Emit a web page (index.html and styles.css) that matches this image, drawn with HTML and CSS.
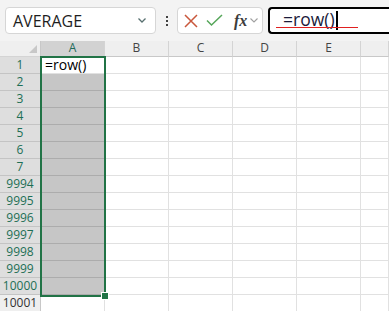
FILE: index.html
```html
<html>
    <head>
        <title>Sheet</title>
    <link rel="stylesheet" href="styles.css">
    </head>
    <body>
        <div class="toolbar">
            <div class="namebox">
                <span class="name">AVERAGE</span>
                <svg class="chev" width="8" height="5" viewBox="0 0 8 5"><polyline points="0.5,0.5 4,4 7.5,0.5" fill="none" stroke="#587070" stroke-width="1.3"/></svg>
            </div>
            <div class="dots"><span></span><span></span><span></span></div>
            <div class="fxbox">
                <svg width="14" height="14" viewBox="0 0 14 14"><path d="M1 1 L13 13 M13 1 L1 13" stroke="#c9573c" stroke-width="1.5"/></svg>
                <svg width="17" height="13" viewBox="0 0 17 13"><polyline points="1,6.5 5.5,11 16,1" fill="none" stroke="#55a659" stroke-width="1.5"/></svg>
                <span class="fx">fx</span>
                <svg width="8" height="5" viewBox="0 0 8 5"><polyline points="0.5,0.5 4,4 7.5,0.5" fill="none" stroke="#a0a0a0" stroke-width="1.1"/></svg>
            </div>
            <div class="formula">
                <span class="ftext">=row()</span><span class="caret"></span>
                <div class="squiggle"></div>
            </div>
        </div>

        <div class="sheet">
            <div class="row head">
                <div class="rh corner"><div class="tri"></div></div>
                <div class="ch sel">A</div><div class="ch">B</div><div class="ch">C</div><div class="ch">D</div><div class="ch">E</div><div class="ch"></div>
            </div>
            <div class="row"><div class="rh on">1</div><div class="c active">=row()</div><div class="c"></div><div class="c"></div><div class="c"></div><div class="c"></div><div class="c"></div></div>
            <div class="row"><div class="rh on">2</div><div class="c g"></div><div class="c"></div><div class="c"></div><div class="c"></div><div class="c"></div><div class="c"></div></div>
            <div class="row"><div class="rh on">3</div><div class="c g"></div><div class="c"></div><div class="c"></div><div class="c"></div><div class="c"></div><div class="c"></div></div>
            <div class="row"><div class="rh on">4</div><div class="c g"></div><div class="c"></div><div class="c"></div><div class="c"></div><div class="c"></div><div class="c"></div></div>
            <div class="row"><div class="rh on">5</div><div class="c g"></div><div class="c"></div><div class="c"></div><div class="c"></div><div class="c"></div><div class="c"></div></div>
            <div class="row"><div class="rh on">6</div><div class="c g"></div><div class="c"></div><div class="c"></div><div class="c"></div><div class="c"></div><div class="c"></div></div>
            <div class="row"><div class="rh on">7</div><div class="c g"></div><div class="c"></div><div class="c"></div><div class="c"></div><div class="c"></div><div class="c"></div></div>
            <div class="row"><div class="rh on">9994</div><div class="c g"></div><div class="c"></div><div class="c"></div><div class="c"></div><div class="c"></div><div class="c"></div></div>
            <div class="row"><div class="rh on">9995</div><div class="c g"></div><div class="c"></div><div class="c"></div><div class="c"></div><div class="c"></div><div class="c"></div></div>
            <div class="row"><div class="rh on">9996</div><div class="c g"></div><div class="c"></div><div class="c"></div><div class="c"></div><div class="c"></div><div class="c"></div></div>
            <div class="row"><div class="rh on">9997</div><div class="c g"></div><div class="c"></div><div class="c"></div><div class="c"></div><div class="c"></div><div class="c"></div></div>
            <div class="row"><div class="rh on">9998</div><div class="c g"></div><div class="c"></div><div class="c"></div><div class="c"></div><div class="c"></div><div class="c"></div></div>
            <div class="row"><div class="rh on">9999</div><div class="c g"></div><div class="c"></div><div class="c"></div><div class="c"></div><div class="c"></div><div class="c"></div></div>
            <div class="row"><div class="rh on">10000</div><div class="c g"></div><div class="c"></div><div class="c"></div><div class="c"></div><div class="c"></div><div class="c"></div></div>
            <div class="row"><div class="rh">10001</div><div class="c"></div><div class="c"></div><div class="c"></div><div class="c"></div><div class="c"></div><div class="c"></div></div>

            <!-- selection box over column A -->
            <div class="selection"><div class="handle"></div></div>
        </div>
    </body>
</html>
```

FILE: styles.css
```css
body{
    margin:0;
    font-family: "Open Sans", "Noto Sans", sans-serif;
    background-color:#ffffff;
    overflow:hidden;
}
.toolbar{
    height:41px;
    box-sizing:border-box;
    background-color:#f3f3f3;
    display:flex;
    align-items:flex-start;
    padding:7px 0 0 5px;
}
.toolbar > *{
    flex-shrink:0;
}
.namebox{
    width:151px;
    height:27px;
    box-sizing:border-box;
    background-color:white;
    border:1px solid #d6d6d6;
    border-radius:4px;
    display:flex;
    align-items:center;
    justify-content:space-between;
    padding:0 9px 0 7px;
}
.name{
    font-size:16px;
    color:#1e1e1e;
    line-height:1;
}
.dots{
    width:21px;
    height:27px;
    display:flex;
    flex-direction:column;
    align-items:center;
    justify-content:center;
    gap:2px;
}
.dots span{
    width:2px;
    height:2px;
    background-color:#404040;
}
.fxbox{
    width:86px;
    height:27px;
    box-sizing:border-box;
    background-color:white;
    border:1px solid #d6d6d6;
    border-radius:4px;
    display:flex;
    align-items:center;
    padding:0 0 0 6px;
    gap:8px;
}
.fx{
    font-family:"Liberation Serif", serif;
    font-style:italic;
    font-weight:bold;
    font-size:16px;
    color:#3c3c3c;
    margin-left:3px;
    margin-right:-5px;
}
.formula{
    margin-left:5px;
    width:130px;
    height:27px;
    box-sizing:border-box;
    border:2px solid black;
    border-right:none;
    border-radius:4px 0 0 4px;
    background-color:white;
    position:relative;
    display:flex;
    align-items:center;
    padding-left:13px;
}
.ftext{
    font-size:17.5px;
    color:#1b1b3a;
    line-height:1;
    position:relative;
    top:-1px;
}
.caret{
    width:2px;
    height:19px;
    background-color:black;
    margin-left:1px;
}
.squiggle{
    position:absolute;
    left:6px;
    top:18px;
    width:82px;
    height:1px;
    background-color:#e02020;
}
.sheet{
    position:relative;
}
.row{
    display:grid;
    grid-template-columns:41px 64px 64px 64px 64px 64px 28px;
    height:17px;
}
.row.head{
    height:16px;
}
.rh, .ch, .c{
    box-sizing:border-box;
}
.ch{
    background-color:#efefef;
    border-right:1px solid #d4d4d4;
    border-bottom:1px solid #c8c8c8;
    font-size:12px;
    color:#444444;
    text-align:center;
    line-height:14px;
}
.ch.sel{
    background-color:#d2d2d2;
    color:#1e6a5a;
}
.corner{
    background-color:#efefef;
    border-right:1px solid #c8c8c8;
    border-bottom:1px solid #c8c8c8;
    position:relative;
}
.tri{
    position:absolute;
    right:3px;
    bottom:3px;
    width:0;
    height:0;
    border-left:8px solid transparent;
    border-bottom:8px solid #c8c8c8;
}
.rh{
    background-color:#efefef;
    border-right:1px solid #c8c8c8;
    border-bottom:1px solid #d4d4d4;
    font-size:12px;
    color:#333333;
    text-align:center;
    line-height:16px;
}
.rh.on{
    background-color:#dedede;
    color:#1d6f55;
    border-bottom-color:#c4c4c4;
}
.c{
    border-right:1px solid #e1e1e1;
    border-bottom:1px solid #e1e1e1;
}
.c.g{
    background-color:#c6c6c6;
    border-bottom-color:#acacac;
}
.c.active{
    font-size:14px;
    line-height:16px;
    padding-left:4px;
    color:black;
    white-space:nowrap;
}
.selection{
    position:absolute;
    left:40px;
    top:15px;
    width:66px;
    height:241px;
    box-sizing:border-box;
    border:2px solid #217346;
}
.handle{
    position:absolute;
    right:-5px;
    bottom:-5px;
    width:6px;
    height:6px;
    background-color:#217346;
    border:1px solid white;
}
```
